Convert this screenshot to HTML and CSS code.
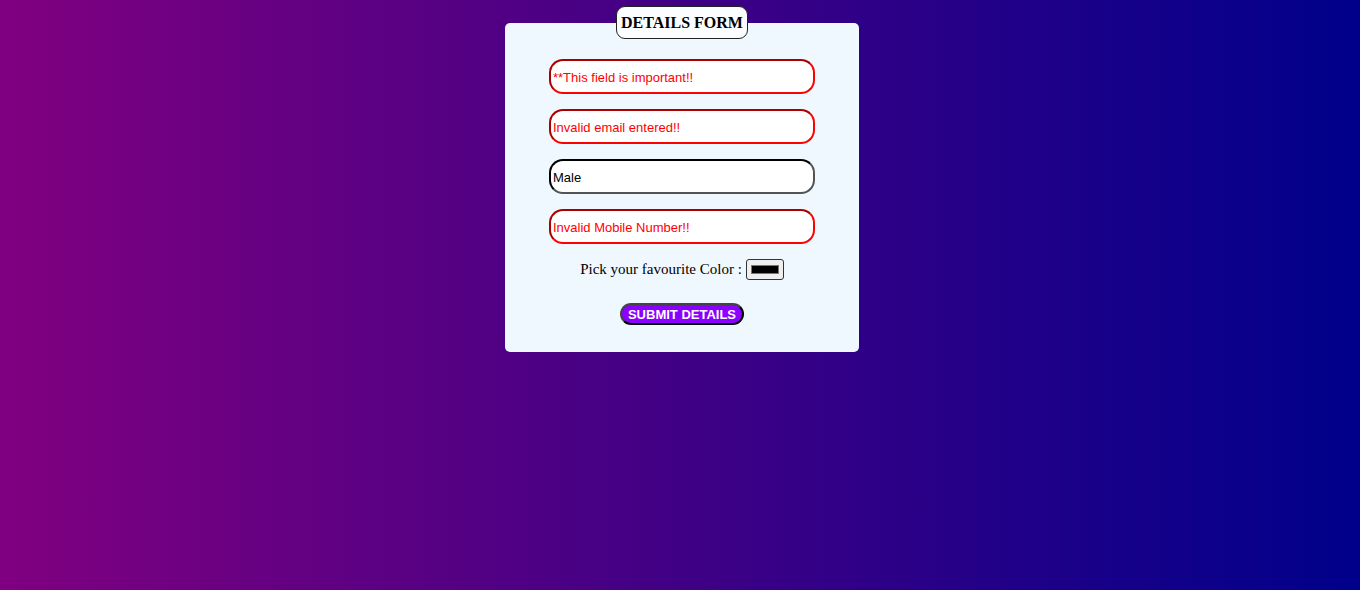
FILE: index.html
```html
<!DOCTYPE html>
<html>
<head>
<meta charset="utf-8">
<link rel="stylesheet" href="styles.css">
</head>
<body>
<form class="form">
  <fieldset class="card">
    <legend class="title">DETAILS FORM</legend>
    <div class="fields">
      <input class="field err" type="text" value="**This field is important!!">
      <input class="field err" type="text" value="Invalid email entered!!">
      <input class="field ok" type="text" value="Male">
      <input class="field err" type="text" value="Invalid Mobile Number!!">
      <div class="color-row">
        <span class="color-label">Pick your favourite Color :</span>
        <input class="color" type="color" value="#000000">
      </div>
      <button class="submit" type="button">SUBMIT DETAILS</button>
    </div>
  </fieldset>
</form>
</body>
</html>
```

FILE: styles.css
```css
html, body {
  margin: 0;
  height: 100%;
}
body {
  background: linear-gradient(to right, #800080, #00008b);
  font-family: "Liberation Serif", serif;
}
.form {
  padding: 6px 0 0 4px;
}
.card {
  width: 354px;
  box-sizing: border-box;
  margin: 0 auto;
  padding: 0;
  border: none;
  border-radius: 5px;
  background: #f0f8ff;
}
.title {
  margin: 0 auto;
  box-sizing: border-box;
  height: 33px;
  width: 132px;
  padding: 0;
  text-align: center;
  line-height: 31px;
  font-size: 16px;
  font-weight: bold;
  background: #fbfdff;
  border: 1px solid #222;
  border-radius: 9px;
}
.fields {
  display: flex;
  flex-direction: column;
  align-items: center;
  padding: 20px 0 27px;
}
.field {
  box-sizing: border-box;
  width: 266px;
  height: 35px;
  margin: 0 0 15px;
  padding: 1px 2px 0;
  border-width: 2px;
  border-style: inset;
  border-radius: 14px;
  background: #fff;
  font-family: "Liberation Sans", sans-serif;
  font-size: 13px;
  outline: none;
}
.field.err {
  color: #f00;
  border-color: #f00;
}
.field.ok {
  color: #000;
  border-color: #000;
}
.color-row {
  display: flex;
  align-items: center;
  gap: 4px;
  height: 21px;
  font-size: 15px;
}
.color {
  box-sizing: border-box;
  width: 38px;
  height: 21px;
  padding: 1px 2px;
  border: 1px solid #333;
  border-radius: 3px;
  background: #efefef;
}
.submit {
  margin-top: 23px;
  box-sizing: border-box;
  width: 124px;
  height: 22px;
  padding: 0;
  border: 2px outset #444;
  border-radius: 12px;
  background: #8b00ff;
  color: #fff;
  font-family: "Liberation Sans", sans-serif;
  font-weight: bold;
  font-size: 13px;
}
```
